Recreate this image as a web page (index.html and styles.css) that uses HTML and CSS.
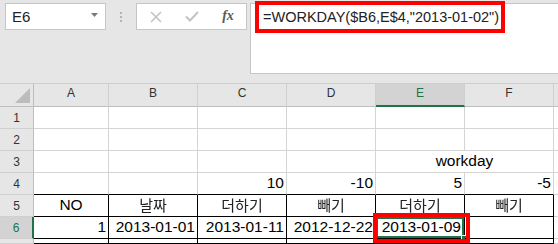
FILE: index.html
```html
<!DOCTYPE html>
<html lang="ko">
<head>
    <meta charset="UTF-8">
    <title>workday</title>
    <link rel="stylesheet" href="styles.css">
</head>
<body>
    <div class="toolbar">
        <div class="namebox">
            <span>E6</span>
            <svg class="drop" width="8" height="5" viewBox="0 0 8 5"><polygon points="0,0 7,0 3.5,4" fill="#7a7a7a"/></svg>
        </div>
        <div class="grip">
            <svg width="3" height="11" viewBox="0 0 3 11"><rect x="0" y="0" width="2" height="2" fill="#b4b4b4"/><rect x="0" y="4" width="2" height="2" fill="#b4b4b4"/><rect x="0" y="8" width="2" height="2" fill="#b4b4b4"/></svg>
        </div>
        <div class="buttons">
            <div class="btn">
                <svg width="12" height="12" viewBox="0 0 12 12"><path d="M1 1 L11 11 M11 1 L1 11" stroke="#c3c3c3" stroke-width="1.6" fill="none"/></svg>
            </div>
            <div class="btn">
                <svg width="14" height="11" viewBox="0 0 14 11"><path d="M1 5.5 L5 9.5 L13 1" stroke="#c3c3c3" stroke-width="2" fill="none"/></svg>
            </div>
            <div class="btn fx">fx</div>
        </div>
        <div class="formula">=WORKDAY($B6,E$4,"2013-01-02")</div>
    </div>

    <div class="sheet">
        <!-- column headers -->
        <div class="corner"><svg width="15" height="15" viewBox="0 0 15 15"><polygon points="15,0 15,15 0,15" fill="#bcbcbc"/></svg></div>
        <div class="hdr">A</div>
        <div class="hdr">B</div>
        <div class="hdr">C</div>
        <div class="hdr">D</div>
        <div class="hdr active">E</div>
        <div class="hdr">F</div>
        <div class="hdr last"></div>

        <!-- 1 -->
        <div class="rowhdr">1</div>
        <div class="cell"></div><div class="cell"></div><div class="cell"></div><div class="cell"></div><div class="cell"></div><div class="cell"></div><div class="cell"></div>

        <!-- 2 -->
        <div class="rowhdr">2</div>
        <div class="cell"></div><div class="cell"></div><div class="cell"></div><div class="cell"></div><div class="cell"></div><div class="cell"></div><div class="cell"></div>

        <!-- 3 -->
        <div class="rowhdr">3</div>
        <div class="cell"></div><div class="cell"></div><div class="cell"></div><div class="cell"></div>
        <div class="cell mid merged">workday</div>
        <div class="cell"></div>

        <!-- 4 -->
        <div class="rowhdr">4</div>
        <div class="cell top"></div>
        <div class="cell top"></div>
        <div class="cell num top">10</div>
        <div class="cell num top">-10</div>
        <div class="cell num top">5</div>
        <div class="cell num top">-5</div>
        <div class="cell"></div>

        <!-- 5 -->
        <div class="rowhdr">5</div>
        <div class="cell mid box">NO</div>
        <div class="cell mid box ko">날짜</div>
        <div class="cell mid box ko">더하기</div>
        <div class="cell mid box ko">빼기</div>
        <div class="cell mid box ko">더하기</div>
        <div class="cell mid box ko">빼기</div>
        <div class="cell"></div>

        <!-- 6 -->
        <div class="rowhdr active">6</div>
        <div class="cell num box">1</div>
        <div class="cell num box">2013-01-01</div>
        <div class="cell num box">2013-01-11</div>
        <div class="cell num box">2012-12-22</div>
        <div class="cell num box selected">2013-01-09<span class="handle"></span></div>
        <div class="cell box"></div>
        <div class="cell"></div>

        <!-- 7 (cut off) -->
        <div class="rowhdr"></div>
        <div class="cell box"></div><div class="cell box"></div><div class="cell box"></div><div class="cell box"></div><div class="cell box"></div><div class="cell box"></div>
        <div class="cell"></div>
    </div>

    <div class="mark mark-formula"></div>
    <div class="mark mark-cell"></div>
</body>
</html>
```

FILE: styles.css
```css
*{
    margin: 0;
    padding: 0;
    box-sizing: border-box;
}
body{
    background: #e6e6e6;
    font-family: "Liberation Sans", "Noto Sans CJK KR", sans-serif;
    width: 558px;
    height: 244px;
    overflow: hidden;
    position: relative;
}

/* formula bar area */
.toolbar{
    display: flex;
    align-items: flex-start;
    height: 83px;
    padding: 3px 0 0 5px;
}
.namebox{
    width: 101px;
    height: 27px;
    background: #fff;
    border: 1px solid #c6c6c6;
    display: flex;
    align-items: center;
    justify-content: space-between;
    padding: 0 6px 0 6px;
    font-size: 15px;
    color: #222;
}
.namebox .drop{
    margin-top: -2px;
}
.grip{
    width: 30px;
    height: 27px;
    display: flex;
    align-items: center;
    justify-content: center;
    padding-top: 1px;
}
.buttons{
    width: 111px;
    height: 27px;
    background: #fff;
    border: 1px solid #c6c6c6;
    display: flex;
    padding-left: 1px;
}
.btn{
    width: 36px;
    height: 25px;
    display: flex;
    align-items: center;
    justify-content: center;
}
.fx{
    font-family: "Liberation Serif", serif;
    font-style: italic;
    font-weight: bold;
    font-size: 14px;
    color: #595959;
    padding-bottom: 2px;
}
.formula{
    flex: 1;
    height: 71px;
    margin-left: 3px;
    background: #fff;
    border: 1px solid #c6c6c6;
    border-right: 0;
    padding: 3px 0 0 12px;
    font-size: 14.5px;
    line-height: 20px;
    color: #222;
    white-space: nowrap;
}

/* grid */
.sheet{
    display: grid;
    grid-template-columns: 34px 75px 89px 89px 89px 89px 89px 1fr;
    grid-template-rows: 23px repeat(6, 22px) 5px;
    border-top: 1px solid #cdcdcd;
    background: #fff;
}
.corner{
    background: #e6e6e6;
    border-right: 1px solid #bdbdbd;
    border-bottom: 1px solid #bdbdbd;
    display: flex;
    align-items: flex-end;
    justify-content: flex-end;
    padding: 0 3px 3px 0;
}
.hdr{
    background: #e6e6e6;
    border-right: 1px solid #d0d0d0;
    border-bottom: 1px solid #bdbdbd;
    text-align: center;
    font-size: 12px;
    line-height: 16px;
    padding-top: 1px;
    color: #333;
}
.hdr.last{
    border-right: 0;
}
.hdr.active{
    background: #d3d3d3;
    color: #217346;
    border-bottom: 2px solid #217346;
}
.rowhdr{
    background: #e6e6e6;
    border-right: 1px solid #bdbdbd;
    border-bottom: 1px solid #d0d0d0;
    text-align: center;
    font-size: 12px;
    line-height: 16px;
    padding-top: 3px;
    color: #333;
}
.rowhdr.active{
    background: #d3d3d3;
    color: #217346;
    border-right: 2px solid #217346;
}
.cell{
    border-right: 1px solid #d4d4d4;
    border-bottom: 1px solid #d4d4d4;
    font-size: 15.5px;
    line-height: 19px;
    padding: 0 2px;
    color: #000;
    white-space: nowrap;
    position: relative;
}
.num{
    text-align: right;
}
.mid{
    text-align: center;
}
.ko{
    font-family: "Noto Sans CJK KR", sans-serif;
    font-size: 15px;
    color: #222;
    will-change: transform;
}
.merged{
    grid-column: span 2;
}
.top{
    border-bottom-color: #000;
}
.box{
    border-right-color: #000;
    border-bottom-color: #000;
}
.selected{
    box-shadow: inset 0 0 0 2px #217346;
    padding-right: 3px;
}
.handle{
    position: absolute;
    right: -3px;
    bottom: -3px;
    width: 6px;
    height: 6px;
    background: #217346;
    border: 1px solid #fff;
}

/* red annotation boxes */
.mark{
    position: absolute;
    border: 4px solid #ff0000;
}
.mark-formula{
    left: 255px;
    top: 1px;
    width: 250px;
    height: 32px;
}
.mark-cell{
    left: 373px;
    top: 213px;
    width: 97px;
    height: 30px;
}
```
